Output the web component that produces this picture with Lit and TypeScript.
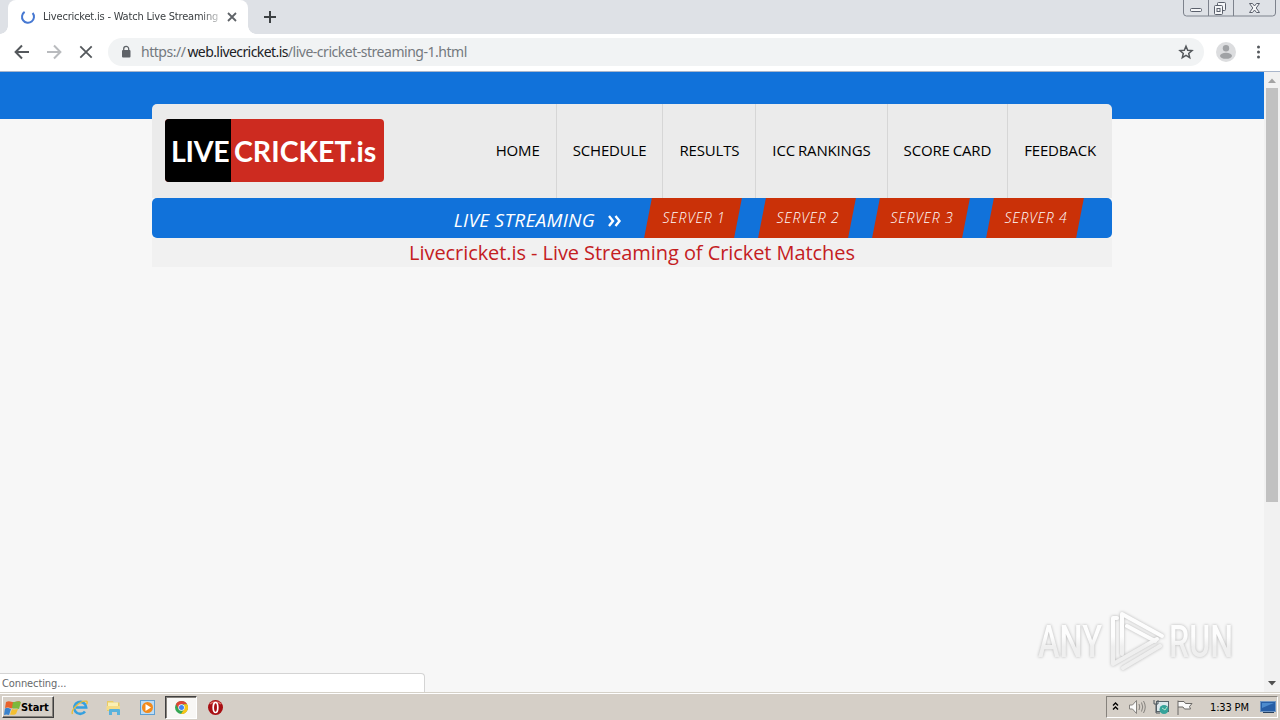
import { LitElement, html, css, svg } from 'lit';
import { customElement, property } from 'lit/decorators.js';

//
// window chrome, split in the same order as it is stacked on the screen:
// tab strip, toolbar, page, task bar
//

@customElement('browser-tabs')
class BrowserTabs extends LitElement {
  static styles = css`
    :host {
      display: flex;
      height: 34px;
      background: #dee1e6;
      font: 11px 'DejaVu Sans Condensed', 'DejaVu Sans', sans-serif;
      color: #3c4043;
    }
    .tab {
      position: relative;
      box-sizing: border-box;
      display: flex;
      align-items: center;
      width: 240px;
      margin-left: 8px;
      padding: 0 9px 0 12px;
      border-radius: 8px 8px 0 0;
      background: #fff;
    }
    .tab::before, .tab::after {
      content: '';
      position: absolute;
      bottom: 0;
      width: 8px;
      height: 8px;
    }
    .tab::before {
      left: -8px;
      background: radial-gradient(circle at 0 0, transparent 7.5px, #fff 8px);
    }
    .tab::after {
      right: -8px;
      background: radial-gradient(circle at 100% 0, transparent 7.5px, #fff 8px);
    }
    .title {
      width: 177px;
      margin: 0 7px 0 7px;
      overflow: hidden;
      white-space: nowrap;
      line-height: 18px;
      letter-spacing: -0.2px;
      -webkit-mask-image: linear-gradient(to right, #000 158px, transparent 182px);
    }
    .plus { margin: 10px 0 0 15px; }
    .buttons { margin-left: auto; margin-right: 4px; }
    svg { display: block; flex: none; }
  `;

  render() {
    return html`
      <div class="tab">
        <svg width="16" height="16" fill="none" stroke="#4678d2" stroke-width="2">
          <path d="M4.6 2.9A6 6 0 1 0 12.6 4"/>
        </svg>
        <span class="title">Livecricket.is - Watch Live Streaming</span>
        <svg width="14" height="14" stroke="#5f6368" stroke-width="1.8">
          <path d="M3 3l8 8M11 3l-8 8"/>
        </svg>
      </div>
      <svg class="plus" width="14" height="14" stroke="#3c4043" stroke-width="2">
        <path d="M1 7h12M7 1v12"/>
      </svg>
      <svg class="buttons" width="93" height="18" fill="none" stroke="#7d828c">
        <path d="M.5 0v13a3 3 0 0 0 3 3h86a3 3 0 0 0 3-3V0M25.500 0v16M50.500 0v16"/>
        <g stroke="#5b606c" fill="#f5f6f8">
          <rect x="7.500" y="8.500" width="11" height="3" rx="1"/>
          <rect x="34.500" y="2.500" width="8" height="8" rx="1"/>
          <rect x="31.500" y="5.500" width="8" height="9" rx="1"/>
          <rect x="34" y="8.500" width="3" height="3"/>
          <path d="M66.500 3.500h3l2 2.500 2-2.500h3l-3.300 4.500 3.300 4.500h-3l-2-2.500-2 2.500h-3l3.300-4.500z"/>
        </g>
      </svg>
    `;
  }
}

@customElement('browser-toolbar')
class BrowserToolbar extends LitElement {
  static styles = css`
    :host {
      box-sizing: border-box;
      display: flex;
      align-items: center;
      height: 38px;
      padding: 0 10px 1px 12px;
      border-bottom: 1px solid #a9b6cb;
      background: #fff;
    }
    svg { display: block; flex: none; }
    .nav { margin-right: 12px; }
    .omnibox {
      box-sizing: border-box;
      display: flex;
      align-items: center;
      width: 1096px;
      height: 28px;
      padding: 0 10px 0 10px;
      border-radius: 14px;
      background: #f1f3f4;
    }
    .url {
      flex: 1;
      margin-left: 7px;
      font: 14px/20px 'Noto Sans', sans-serif;
      letter-spacing: -0.48px;
      color: #74797e;
      white-space: nowrap;
    }
    .host {
      margin-left: 2px;
      letter-spacing: -0.58px;
      color: #202124;
    }
    .user { margin-left: 12px; }
    .menu { margin-left: 14px; }
  `;

  render() {
    return html`
      <svg class="nav" width="20" height="20" fill="none" stroke="#54585c" stroke-width="2">
        <path d="M17 10H4M10 3.500L3.600 10l6.400 6.500"/>
      </svg>
      <svg class="nav" width="20" height="20" fill="none" stroke="#b9bbbe" stroke-width="2">
        <path d="M3 10h13M10 3.500l6.400 6.500-6.400 6.500"/>
      </svg>
      <svg class="nav" width="20" height="20" fill="none" stroke="#54585c" stroke-width="1.800">
        <path d="M4.300 4.300l11.400 11.400M15.700 4.300L4.300 15.700"/>
      </svg>
      <div class="omnibox">
        <svg width="16" height="16">
          <rect x="4" y="6" width="8.500" height="7.500" rx="1" fill="#5f6368"/>
          <path d="M5.700 7V4.900a2.500 2.500 0 0 1 5 0V7" fill="none" stroke="#5f6368" stroke-width="1.300"/>
        </svg>
        <span class="url">https://<span class="host">web.livecricket.is</span>/live-cricket-streaming-1.html</span>
        <svg width="16" height="16" fill="none" stroke="#54585c" stroke-width="1.500">
          <path d="M8 2.200l1.700 4 4.300.4-3.300 2.800 1 4.200-3.700-2.200-3.700 2.200 1-4.200L2 6.600l4.300-.4z"/>
        </svg>
      </div>
      <svg class="user" width="20" height="20" fill="#a0a2a5">
        <circle cx="10" cy="10" r="10" fill="#dcdddf"/>
        <circle cx="10" cy="6.200" r="3.200"/>
        <ellipse cx="10" cy="13.800" rx="6" ry="3"/>
      </svg>
      <svg class="menu" width="16" height="16" fill="#54585c">
        <circle cx="8.500" cy="3" r="1.500"/>
        <circle cx="8.500" cy="8" r="1.500"/>
        <circle cx="8.500" cy="13" r="1.500"/>
      </svg>
    `;
  }
}

//
// the cricket site
//
@customElement('cricket-page')
class CricketPage extends LitElement {
  @property({ type: Array }) items = ['HOME', 'SCHEDULE', 'RESULTS', 'ICC RANKINGS', 'SCORE CARD', 'FEEDBACK'];
  @property({ type: Number }) servers = 4;

  static styles = css`
    :host {
      display: block;
      flex: 1;
      background: linear-gradient(#1172da 47px, #f7f7f7 47px);
      font-family: 'Open Sans', sans-serif;
    }
    .wrap {
      width: 960px;
      margin: 0 auto;
      padding-top: 32px;
    }
    .header {
      display: flex;
      justify-content: space-between;
      height: 94px;
      border-radius: 5px 5px 0 0;
      background: #ebebeb;
    }
    .logo {
      display: flex;
      width: 219px;
      height: 63px;
      margin: 15px 0 0 13px;
      border-radius: 4px;
      overflow: hidden;
      background: #cd2b20;
      color: #fff;
      font: bold 28.5px/65px Lato, sans-serif;
      white-space: nowrap;
    }
    .live {
      width: 60px;
      padding-left: 6px;
      background: #000;
      letter-spacing: -0.3px;
    }
    .name { padding-left: 3px; }
    .nav { display: flex; }
    .nav a {
      padding: 0 16px;
      border-left: 1px solid #d6d6d6;
      font-size: 15px;
      line-height: 93px;
      letter-spacing: -0.16px;
      word-spacing: -0.7px;
      color: #000;
      white-space: nowrap;
    }
    .nav a:first-child { border-left: 0; }
    .bar {
      display: flex;
      justify-content: flex-end;
      height: 40px;
      padding-right: 29px;
      border-radius: 5px;
      background: #1172da;
      color: #fff;
      font-style: italic;
    }
    .label {
      font-size: 19px;
      line-height: 44px;
      letter-spacing: 0.3px;
    }
    .arrows { margin: 17px 5px 0 13px; }
    .server {
      width: 90px;
      margin: 0 3px 0 21px;
      transform: skewX(-11deg);
      background: #ca3108;
      text-align: center;
      font-size: 14px;
      font-weight: 300;
      line-height: 40px;
      letter-spacing: 0.8px;
    }
    .server span {
      display: block;
      padding-left: 2px;
      transform: skewX(11deg);
    }
    h1 {
      height: 29px;
      margin: 0;
      background: #f1f1f1;
      color: #c4201f;
      font-size: 20px;
      font-weight: 400;
      line-height: 30px;
      letter-spacing: -0.07px;
      text-align: center;
    }
  `;

  render() {
    return html`
      <div class="wrap">
        <div class="header">
          <div class="logo"><span class="live">LIVE</span><span class="name">CRICKET.is</span></div>
          <nav class="nav">${this.items.map(x => html`<a>${x}</a>`)}</nav>
        </div>
        <div class="bar">
          <span class="label">LIVE STREAMING</span>
          <svg class="arrows" width="14" height="12" fill="none" stroke="#fff" stroke-width="2.400">
            <path d="M1 1l4 5-4 5M7.500 1l4 5-4 5"/>
          </svg>
          ${Array.from({ length: this.servers }, (_, i) => html`<div class="server"><span>SERVER ${i + 1}</span></div>`)}
        </div>
        <h1>Livecricket.is - Live Streaming of Cricket Matches</h1>
      </div>
    `;
  }
}

@customElement('scroll-bar')
class ScrollBar extends LitElement {
  static styles = css`
    :host {
      display: flex;
      flex-direction: column;
      width: 16px;
      background: #f1f1f1;
    }
    .thumb {
      width: 12px;
      height: 414px;
      margin: 0 auto auto;
      background: #c1c1c1;
    }
    svg { display: block; }
  `;

  render() {
    return html`
      <svg width="16" height="16" fill="#a3a3a3"><path d="M4 11l4-4.500 4 4.500z"/></svg>
      <div class="thumb"></div>
      <svg width="16" height="18" fill="#505050"><path d="M4 7l4 4.500L12 7z"/></svg>
    `;
  }
}

//
// corner watermark
//
@customElement('any-run')
class AnyRun extends LitElement {
  static styles = css`
    :host {
      display: block;
      filter: drop-shadow(0 0 1.500px #b4b4b4);
    }
    text { font: 500 45px Roboto, sans-serif; }
    svg { display: block; }
  `;

  render() {
    return html`
      <svg width="228" height="68">
        <linearGradient id="fade" gradientUnits="userSpaceOnUse" x1="0" y1="0" x2="0" y2="68">
          <stop offset=".45" stop-color="#fdfdfd"/>
          <stop offset=".6" stop-color="#efefef"/>
        </linearGradient>
        <g fill="url(#fade)">
          <text x="2" y="51" textLength="64" lengthAdjust="spacingAndGlyphs">ANY</text>
          <text x="133" y="51" textLength="64" lengthAdjust="spacingAndGlyphs">RUN</text>
        </g>
        <g fill="none" stroke="url(#fade)" stroke-width="4" stroke-linecap="round" stroke-linejoin="round">
          <path d="M81 12h-4v46l44-25M86 48V8l40 22"/>
          <path d="M91 20l28 15M87 62l37-22"/>
        </g>
      </svg>
    `;
  }
}

//
// task bar icons, by name
//
const icons = {
  flag: svg`
    <path d="M2 3c4-2 6 1 9 0 3-1 4-1 5-.5L14 9c-3-1-5 1-8 0-2-.8-4-.5-5 0z" fill="#e8622c"/>
    <path d="M9 3c3 0 4-1 8 0l-2 7c-3-1-5 0-7-1z" fill="#7cb83c"/>
    <path d="M1 9.500c3-1 4 0 6 .5l-2 6c-2-1-4-.5-5 0z" fill="#3b83cd"/>
    <path d="M8 10c2 1 4 0 6 0l-2 5c-2 1-4 1-6 .5z" fill="#f3bf31"/>`,
  ie: svg`
    <path d="M14 12.500A6 6 0 1 1 15.200 8.500H5" fill="none" stroke="#35a0df" stroke-width="2.600"/>
    <path d="M1.500 15C-.5 11 9 1 15.500 2.200c1 .3.800 1.800.1 3" fill="none" stroke="#e8bd3b" stroke-width="1.400"/>`,
  folder: svg`
    <path d="M2 2h6l1 1.500h5.500V12H2z" fill="#e9cb66"/>
    <path d="M3 3.500h10V7H3z" fill="#fbf0b4"/>
    <path d="M1.500 7H15v4H1.500z" fill="#f5dc86"/>
    <path d="M4 16v-5q0-1 1-1h9q1 0 1 1v5h-3v-3H7v3z" fill="#58b2dc"/>`,
  player: svg`
    <rect x="1.500" y="1.500" width="14" height="14" fill="#bcdcf5" stroke="#5e9fd3"/>
    <circle cx="8.500" cy="8.500" r="5.500" fill="#f28a1c"/>
    <path d="M6.500 5l5.500 3.500-5.500 3.500z" fill="#fff"/>`,
  chrome: svg`
    <circle cx="8.500" cy="8.500" r="6.500" fill="#34a653"/>
    <path d="M2.900 5.200A6.500 6.500 0 0 1 14.100 5.200H8.500L5.600 10z" fill="#e04436"/>
    <path d="M14.100 5.200A6.500 6.500 0 0 1 8 15l3.400-5.200-.4-4.600z" fill="#f9c417"/>
    <circle cx="8.500" cy="8.500" r="3.200" fill="#fff"/>
    <circle cx="8.500" cy="8.500" r="2.500" fill="#4285f4"/>`,
  opera: svg`
    <circle cx="8.500" cy="8.500" r="7.500" fill="#a80f13"/>
    <path d="M3 5a7 5 0 0 1 11 0" fill="none" stroke="#dd6a62" stroke-width="1.500"/>
    <ellipse cx="8.500" cy="8.500" rx="2.300" ry="5" fill="#a80f13" stroke="#fff" stroke-width="1.700"/>`,
};

@customElement('task-bar')
class TaskBar extends LitElement {
  static styles = css`
    :host {
      box-sizing: border-box;
      display: flex;
      align-items: center;
      height: 28px;
      padding: 1px 2px 0 2px;
      border-top: 1px solid #d5d1c8;
      box-shadow: inset 0 1px #fff;
      background: #d5cfc7;
      font: 11px 'DejaVu Sans Condensed', 'DejaVu Sans', sans-serif;
      color: #000;
    }
    svg { display: block; flex: none; }
    .start {
      box-sizing: border-box;
      display: flex;
      align-items: center;
      width: 52px;
      height: 22px;
      margin-right: 9px;
      padding-left: 1px;
      border: 1px solid;
      border-color: #fff #404040 #404040 #fff;
      box-shadow: inset -1px -1px #86827c;
      font-weight: bold;
      letter-spacing: -0.1px;
    }
    .slot {
      box-sizing: border-box;
      display: flex;
      align-items: center;
      justify-content: center;
      width: 32px;
      height: 23px;
      margin-right: 2px;
      border: 1px solid transparent;
    }
    .active {
      border-color: #404040 #fff #fff #404040;
      box-shadow: inset 1px 1px #86827c;
      background: #f8f7f5;
    }
    .tray {
      box-sizing: border-box;
      display: flex;
      align-items: center;
      width: 172px;
      height: 22px;
      margin-left: auto;
      padding-left: 4px;
      border: 1px solid;
      border-color: #86827c #fff #fff #86827c;
    }
    .time {
      width: 40px;
      margin: 0 10px 0 17px;
      letter-spacing: -0.15px;
      white-space: nowrap;
    }
  `;

  render() {
    return html`
      <div class="start"><svg width="17" height="17">${icons.flag}</svg>Start</div>
      ${['ie', 'folder', 'player', 'chrome', 'opera'].map(x => html`
        <div class="slot ${x === 'chrome' ? 'active' : ''}">
          <svg width="17" height="17">${icons[x]}</svg>
        </div>`)}
      <div class="tray">
        <svg width="82" height="18">
          <path d="M2 7.500l2.500-2.500 2.500 2.500M2 11.500l2.500-2.500 2.500 2.500" fill="none" stroke="#000" stroke-width="1.400"/>
          <g stroke="#85827e" fill="#fafafa">
            <path d="M18.500 7h3l4-4.500v13l-4-4.500h-3z"/>
            <path d="M28 6q1.500 3 0 6M30.500 4.500q2.500 4.500 0 9M32.500 3q3.500 6 0 12" fill="none"/>
          </g>
          <rect x="45.500" y="3.500" width="12" height="10" fill="#dce8ec" stroke="#58636a"/>
          <path d="M43 2v4h4V2M45 6v9h4" fill="none" stroke="#4d575c"/>
          <circle cx="53" cy="11.500" r="4.500" fill="#36a39a"/>
          <path d="M51 10l3 2 2-3" fill="none" stroke="#b4e4cb"/>
          <path d="M67 17V2.500M67 3.500h6l1.500 2h6.500l-2.500 3 1 2.500h-6l-1.500-2h-5" fill="#fafafa" stroke="#6b6966"/>
        </svg>
        <span class="time">1:33 PM</span>
        <svg width="16" height="16">
          <rect x=".5" y="2.500" width="15" height="10" fill="#275ea6" stroke="#7097c4"/>
          <path d="M2 4h12L2 9z" fill="#4c8bce"/>
          <path d="M3 13.500h11" stroke="#27405e"/>
        </svg>
      </div>
    `;
  }
}

@customElement('app-root')
class AppRoot extends LitElement {
  static styles = css`
    :host {
      display: flex;
      flex-direction: column;
      width: 1280px;
      height: 720px;
      overflow: hidden;
    }
    .content {
      position: relative;
      display: flex;
      height: 620px;
    }
    .mark {
      position: absolute;
      right: 16px;
      bottom: 18px;
    }
    .status {
      position: absolute;
      left: 0;
      bottom: 0;
      box-sizing: border-box;
      width: 425px;
      height: 19px;
      padding-left: 2px;
      border: 1px solid #d4d4d4;
      border-width: 1px 1px 0 0;
      border-radius: 0 4px 0 0;
      background: #fff;
      color: #66696c;
      font: 11px/20px 'DejaVu Sans Condensed', 'DejaVu Sans', sans-serif;
      letter-spacing: -0.1px;
    }
  `;

  render() {
    return html`
      <browser-tabs></browser-tabs>
      <browser-toolbar></browser-toolbar>
      <div class="content">
        <cricket-page></cricket-page>
        <scroll-bar></scroll-bar>
        <any-run class="mark"></any-run>
        <div class="status">Connecting...</div>
      </div>
      <task-bar></task-bar>
    `;
  }
}
